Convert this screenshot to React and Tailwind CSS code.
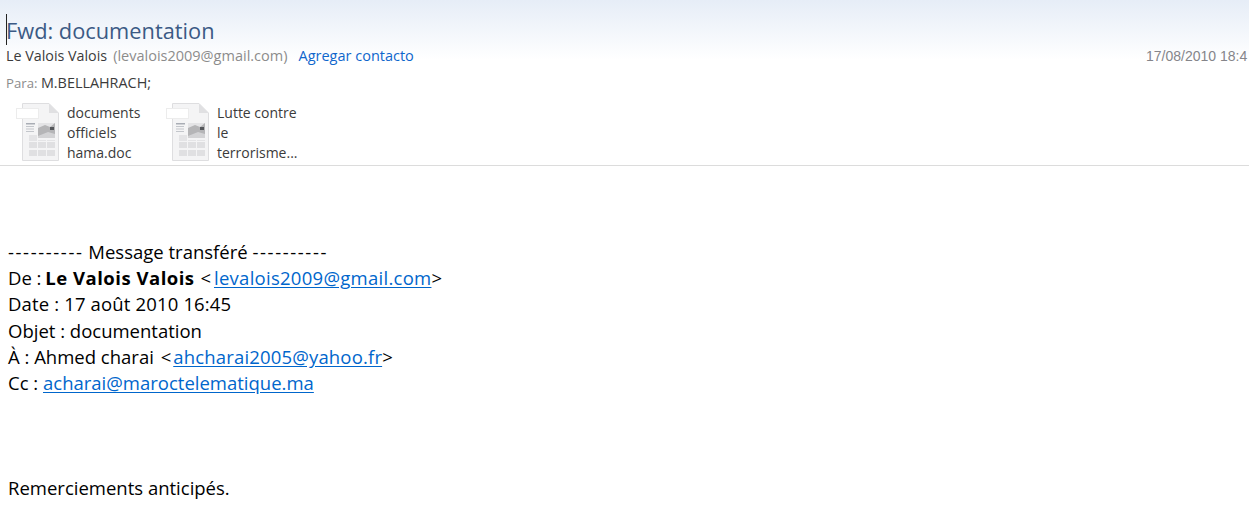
import React from 'react';

const font = { fontFamily: '"Open Sans", "Noto Sans", sans-serif' };

// generic document thumbnail used for the attachments
const DocIcon = () => (
  <svg width="46" height="60" viewBox="0 0 46 60" className="shrink-0">
    <path d="M6.5 0.5H33L42.5 10V57.5H6.5Z" fill="#f4f4f5" stroke="#dedee0" />
    <path d="M33 0.5V10H42.5Z" fill="#e0e0e2" />
    <rect x="0.5" y="5.5" width="22" height="10" fill="#ffffff" stroke="#ececec" />
    <rect x="10" y="20" width="9" height="1.5" fill="#a9adb5" />
    <rect x="10" y="23" width="8" height="1" fill="#c3c6cb" />
    <rect x="10" y="25.5" width="8" height="1" fill="#c3c6cb" />
    <rect x="10" y="28" width="8" height="1" fill="#c3c6cb" />
    <rect x="22" y="20" width="17" height="15" fill="#b5b5b7" />
    <path d="M22 25L29 22L34 24L39 20H22Z" fill="#e4e4e6" />
    <path d="M22 33L32 29L39 31V35H22Z" fill="#d3d3d5" />
    <rect x="34" y="24" width="4" height="3" fill="#55575b" />
    <rect x="13" y="32" width="8" height="6" fill="#e4e4e6" />
    <rect x="22" y="37" width="8" height="1" fill="#e4e4e6" />
    <rect x="31" y="37" width="8" height="1" fill="#e4e4e6" />
    <rect x="13" y="39" width="8" height="6" fill="#e0e0e2" />
    <rect x="22" y="39" width="8" height="6" fill="#e0e0e2" />
    <rect x="31" y="39" width="8" height="6" fill="#e0e0e2" />
    <rect x="13" y="47" width="8" height="6" fill="#e0e0e2" />
    <rect x="22" y="47" width="8" height="6" fill="#e0e0e2" />
    <rect x="31" y="47" width="8" height="6" fill="#e0e0e2" />
  </svg>
);

const Attachment = ({ lines, className }) => (
  <div className={`flex items-start gap-[5px] ${className}`}>
    <DocIcon />
    <div className="text-[14px] leading-[20px] text-[#3b3b3b] whitespace-nowrap">
      {lines.map((l) => (
        <div key={l}>{l}</div>
      ))}
    </div>
  </div>
);

const Mail = ({ children, className = '' }) => (
  <a href="#" className={`text-[#0066cc] underline underline-offset-2 ${className}`}>
    {children}
  </a>
);

const Dashes = () => <span className="tracking-[1.6px]">----------</span>;

export default function App() {
  return (
    <div style={font} className="h-[513px] w-[1249px] overflow-hidden bg-white">
      {/* Header */}
      <div className="h-[166px] border-b border-[#dcdcdc] bg-gradient-to-b from-[#e6edf7] to-white bg-[length:100%_60px] bg-no-repeat">
        <div className="relative pl-[6px] pt-[15px] text-[21.8px] leading-[32px] text-[#3b5a85]">
          <span className="absolute left-[6px] top-[14px] h-[31px] w-px bg-[#222222]" />
          Fwd: documentation
        </div>
        <div className="-mt-[1px] flex items-baseline pl-[6px] text-[14.3px] leading-[20px]">
          <span className="text-[#3b3b3b]">Le Valois Valois</span>
          <span className="ml-[6px] text-[14.5px] text-[#8c8c8c]">(levalois2009@gmail.com)</span>
          <span className="ml-[11px] text-[14.5px] text-[#0f66cc]">Agregar contacto</span>
          <span style={{ fontFamily: '"Liberation Sans", sans-serif' }} className="ml-auto w-[103px] overflow-hidden whitespace-nowrap text-[14px] text-[#85858a]">
            17/08/2010 18:4
          </span>
        </div>
        <div className="pl-[6px] pt-[7px] text-[14.4px] leading-[20px]">
          <span className="text-[13.2px] text-[#8c8c8c]">Para: </span>
          <span className="text-[#3b3b3b]">M.BELLAHRACH;</span>
        </div>
        <div className="flex pl-[16px] pt-[10px]">
          <Attachment lines={['documents', 'officiels', 'hama.doc']} className="w-[150px]" />
          <Attachment lines={['Lutte contre', 'le', 'terrorisme...']} />
        </div>
      </div>

      {/* Body */}
      <div className="pl-[8px] pt-[73px] text-[18.5px] leading-[26.2px] text-black">
        <div>
          <Dashes /> Message transféré <Dashes />
        </div>
        <div>
          De : <b className="-ml-[1px] tracking-[0.5px]">Le Valois Valois</b>{' '}
          <span className="ml-[1px] mr-[3px]">&lt;</span>
          <Mail className="tracking-[0.27px]">levalois2009@gmail.com</Mail>&gt;
        </div>
        <div className="tracking-[0.15px]">Date : 17 août 2010 16:45</div>
        <div>Objet : documentation</div>
        <div>
          À : Ahmed charai <span className="ml-[2px] mr-[2px]">&lt;</span>
          <Mail className="tracking-[0.17px]">ahcharai2005@yahoo.fr</Mail>&gt;
        </div>
        <div>
          Cc : <Mail>acharai@maroctelematique.ma</Mail>
        </div>
        <div className="pt-[79px]">Remerciements anticipés.</div>
      </div>
    </div>
  );
}
